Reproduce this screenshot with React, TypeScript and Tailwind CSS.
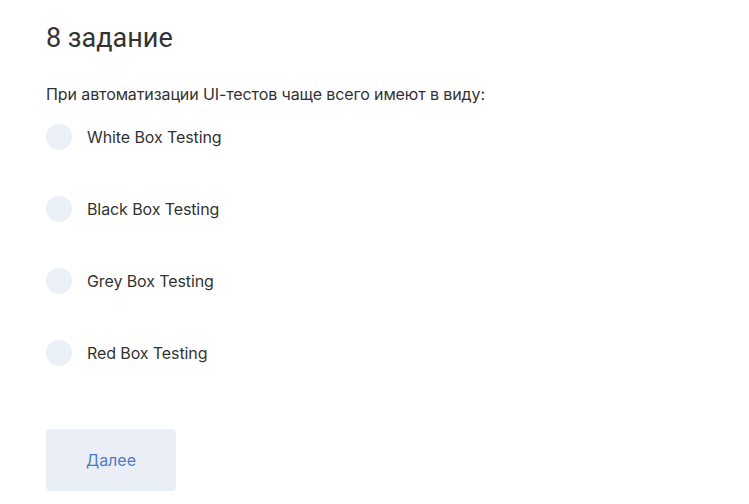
const options = ['White Box Testing', 'Black Box Testing', 'Grey Box Testing', 'Red Box Testing'];

export default function App() {
  return (
    <div className="min-h-[504px] bg-white px-[46px] pt-[20px] text-[#333333]" style={{ fontFamily: 'Inter, "Noto Sans", sans-serif' }}>
      <h1 className="text-[27px] leading-[36px] font-normal" style={{ fontFamily: 'Roboto, sans-serif' }}>8 задание</h1>

      <p className="mt-[28px] text-[16px] leading-[20px] tracking-[-0.1px]">При автоматизации UI-тестов чаще всего имеют в виду:</p>

      <div className="mt-[20px] flex flex-col gap-[46px]">
        {options.map((o) => (
          <label key={o} className="flex items-center gap-[15px] cursor-pointer">
            <span className="h-[26px] w-[26px] rounded-full bg-[#ebeff6]" />
            <span className="text-[16px] leading-[20px] tracking-[-0.1px]">{o}</span>
          </label>
        ))}
      </div>

      <button className="mt-[63px] flex h-[62px] w-[130px] items-center justify-center rounded-[4px] bg-[#eaeff7] text-[16px] text-[#4e7bc7]">
        Далее
      </button>
    </div>
  );
}
